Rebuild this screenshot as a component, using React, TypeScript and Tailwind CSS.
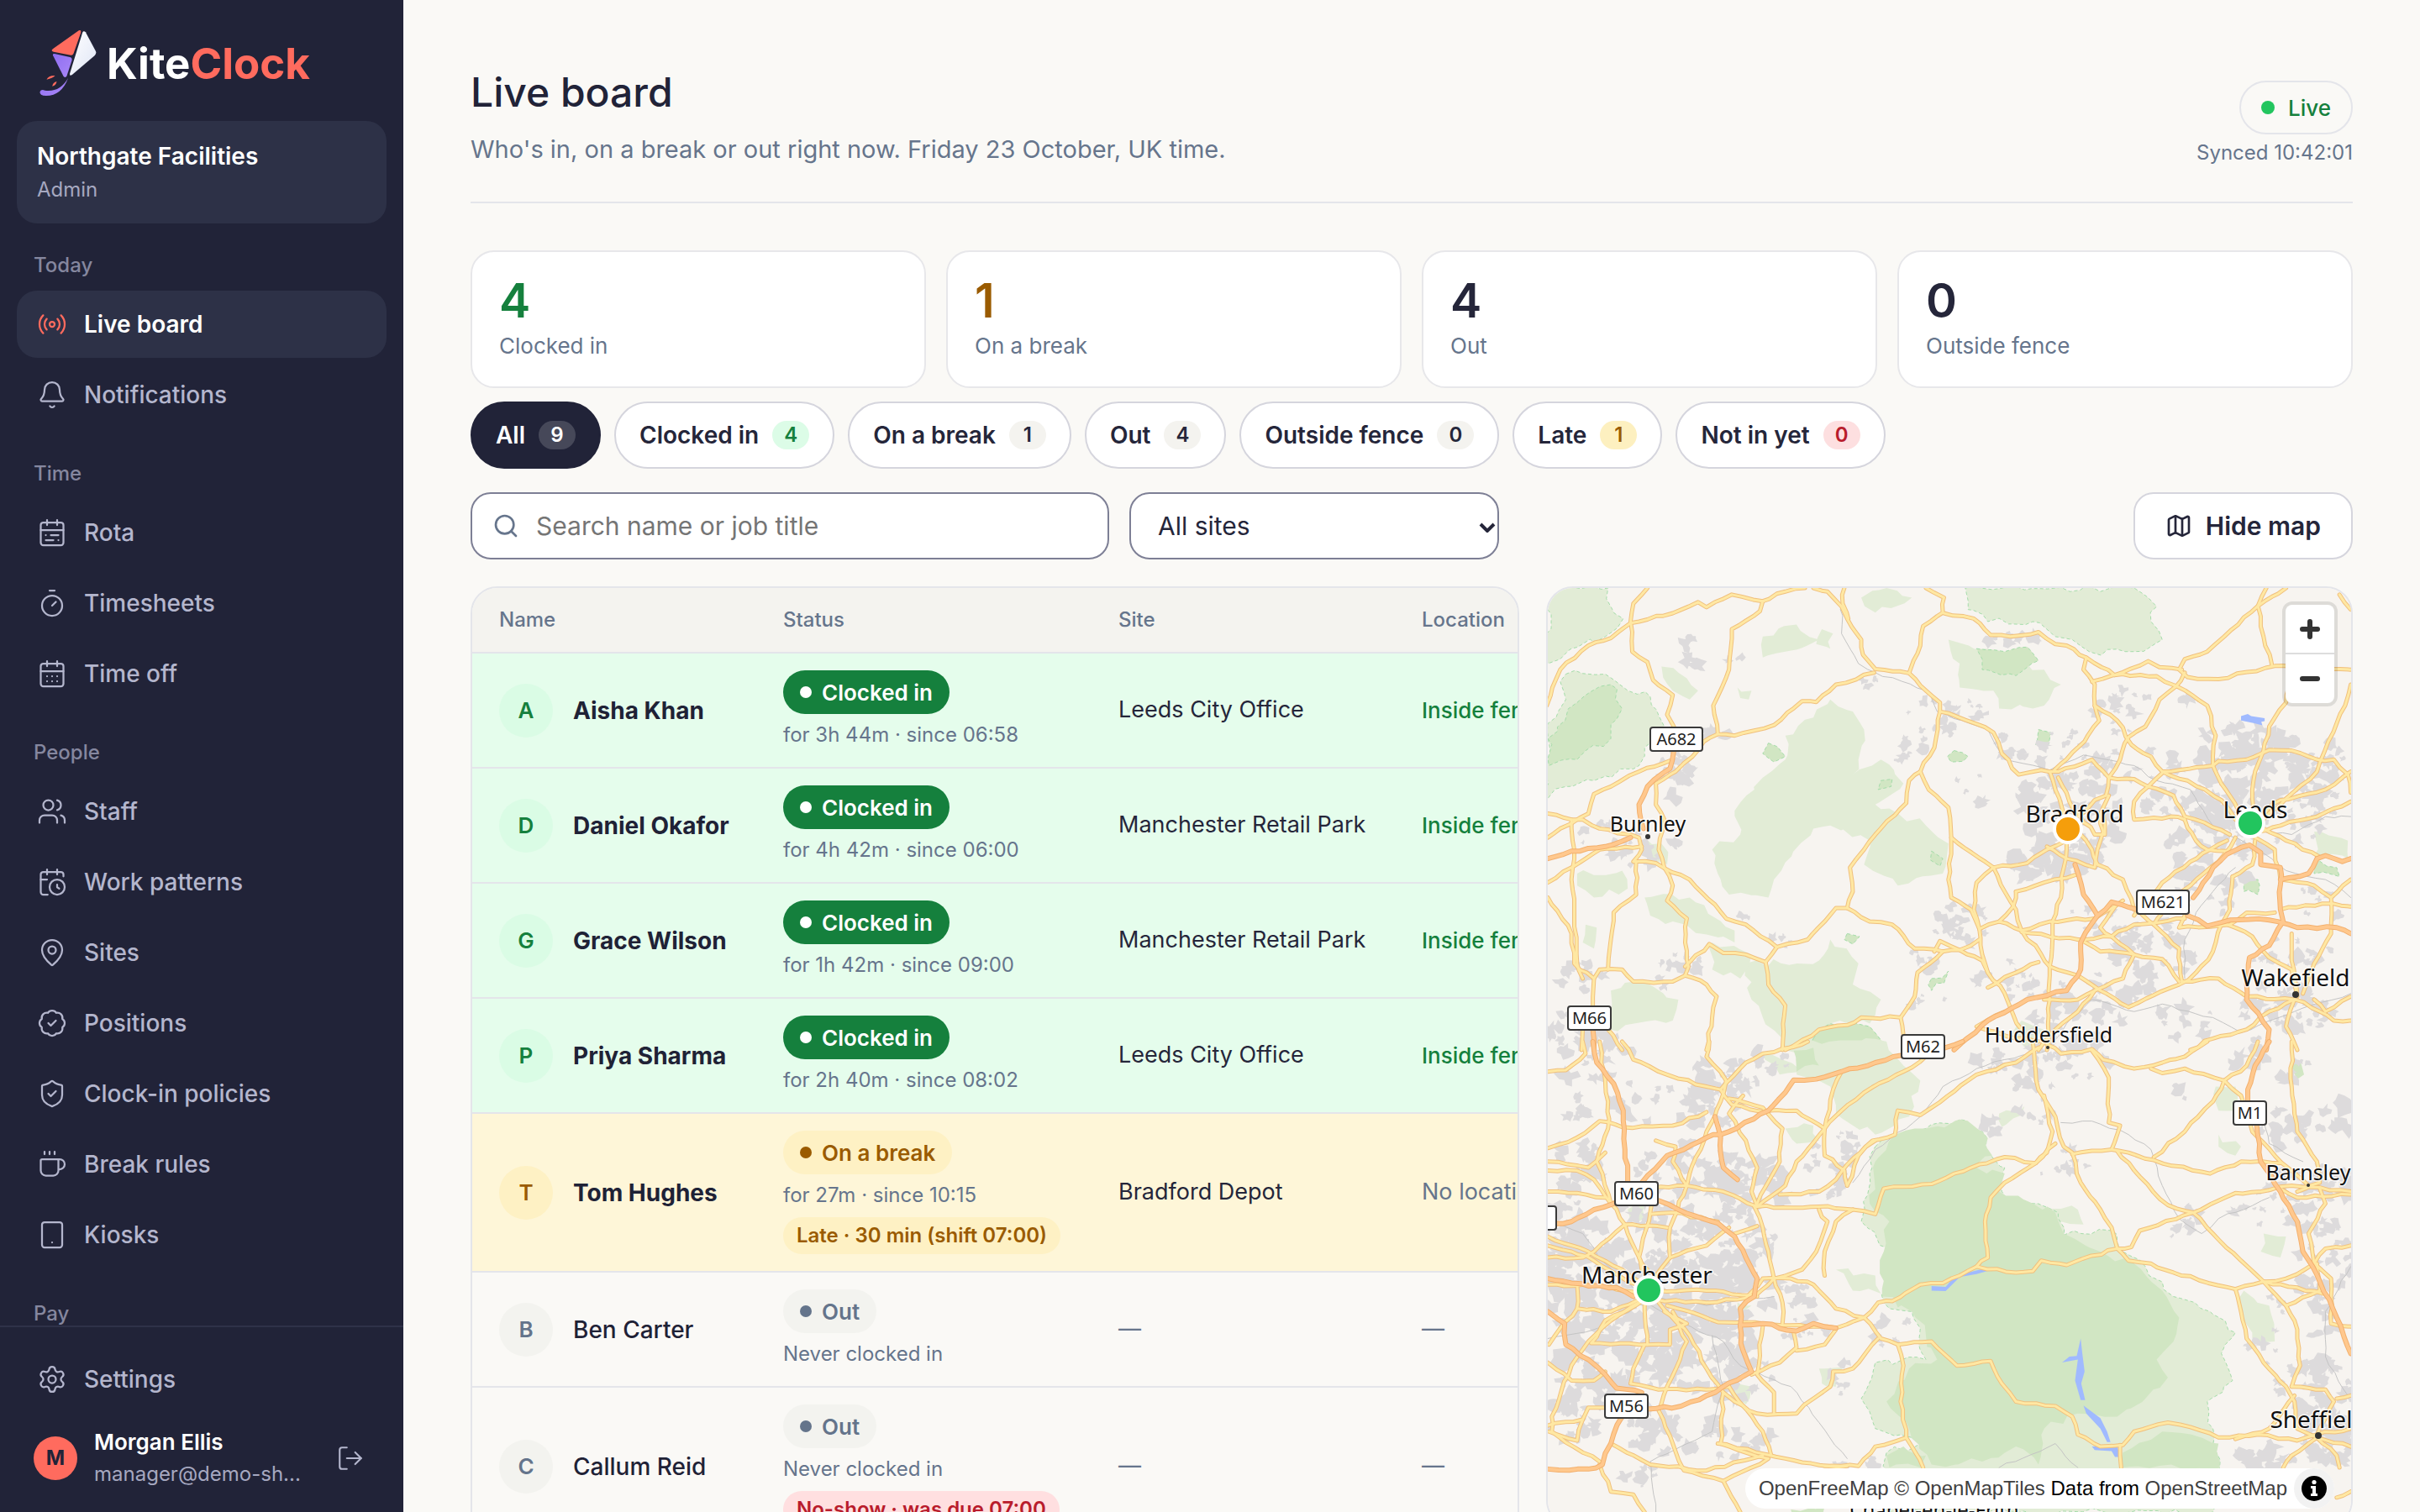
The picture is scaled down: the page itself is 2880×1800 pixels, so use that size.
import React from "react";
import {
  BadgeCheck,
  Bell,
  CalendarClock,
  CalendarDays,
  CalendarRange,
  Coffee,
  LogOut,
  Map as MapIcon,
  MapPin,
  Radio,
  Search,
  Settings,
  ShieldCheck,
  Tablet,
  Timer,
  Users,
  type LucideIcon,
} from "lucide-react";

type NavEntry = { label: string; icon: LucideIcon; active?: boolean };

const NAV: { title: string; items: NavEntry[] }[] = [
  {
    title: "Today",
    items: [
      { label: "Live board", icon: Radio, active: true },
      { label: "Notifications", icon: Bell },
    ],
  },
  {
    title: "Time",
    items: [
      { label: "Rota", icon: CalendarRange },
      { label: "Timesheets", icon: Timer },
      { label: "Time off", icon: CalendarDays },
    ],
  },
  {
    title: "People",
    items: [
      { label: "Staff", icon: Users },
      { label: "Work patterns", icon: CalendarClock },
      { label: "Sites", icon: MapPin },
      { label: "Positions", icon: BadgeCheck },
      { label: "Clock-in policies", icon: ShieldCheck },
      { label: "Break rules", icon: Coffee },
      { label: "Kiosks", icon: Tablet },
    ],
  },
  { title: "Pay", items: [] },
];

function Logo() {
  return (
    <svg viewBox="50 45 206 240" className="h-20 w-[69px]" aria-hidden="true">
      <defs>
        <linearGradient id="kite-violet" x1="0" y1="0" x2="1" y2="1">
          <stop offset="0" stopColor="#8f6df0" />
          <stop offset="1" stopColor="#a988f8" />
        </linearGradient>
        <linearGradient id="kite-white" x1="0" y1="0" x2="1" y2="1">
          <stop offset="0" stopColor="#ffffff" />
          <stop offset="1" stopColor="#dfe5f5" />
        </linearGradient>
      </defs>
      <path d="M193 49 102 113Q90 121 103 125L165 137Q171 138 174 131L200 57Q202 45 193 49Z" fill="#ff6b5e" />
      <path d="M106 132Q98 131 101 139L138 212Q145 221 150 211L168 156Q170 146 161 144Z" fill="url(#kite-violet)" />
      <path d="M206 56Q210 48 217 55L253 122Q257 130 250 138L169 207Q159 213 161 202Z" fill="url(#kite-white)" />
      <path d="M155 218Q132 281 76 282Q52 282 54 268Q58 257 72 263Q126 270 155 218Z" fill="url(#kite-violet)" />
      <path d="M78 224Q84 209 108 210Q100 220 78 224Z" fill="#ff6b5e" />
      <path d="M98 248Q100 235 114 231Q112 245 98 248Z" fill="#ff6b5e" />
    </svg>
  );
}

function NavLink({ label, icon: Icon, active }: NavEntry) {
  return (
    <a
      href="#"
      aria-current={active ? "page" : undefined}
      className={
        active
          ? "flex h-20 items-center gap-5 rounded-3xl bg-[#2d3147] px-6 text-[28px] font-semibold text-white"
          : "flex h-20 items-center gap-5 rounded-3xl px-6 text-[28px] font-medium text-[#b4b6cd]"
      }
    >
      <Icon size={36} strokeWidth={1.5} className={active ? "text-[#ff6b5e]" : "text-[#b4b6cd]"} />
      {label}
    </a>
  );
}

function Sidebar() {
  return (
    <aside className="flex w-[480px] shrink-0 flex-col bg-[#212338]">
      <div className="flex h-36 shrink-0 items-center gap-3 pt-1.5 pl-[46px]">
        <Logo />
        <span className="text-[51px] leading-none font-bold text-white">
          Kite<span className="text-[#ff6b5e]">Clock</span>
        </span>
      </div>
      <div className="mx-5 shrink-0 rounded-3xl bg-[#2d3147] px-6 pt-[22px] pb-5">
        <div className="text-[28px] leading-10 font-semibold text-white">Northgate Facilities</div>
        <div className="text-[24px] leading-10 text-[#a6a8c0]">Admin</div>
      </div>
      <nav className="min-h-0 flex-1 overflow-hidden px-5">
        {NAV.map((s, i) => (
          <div key={s.title} className={i === 0 ? "pt-8" : "pt-9"}>
            <h2 className="mb-3 px-5 text-[24px] leading-9 font-medium text-[#85879f]">{s.title}</h2>
            <div className="flex flex-col gap-1">
              {s.items.map((it) => (
                <NavLink key={it.label} {...it} />
              ))}
            </div>
          </div>
        ))}
      </nav>
      <div className="shrink-0 border-t-2 border-[#2f3248] px-5 pt-[22px] pb-[26px]">
        <NavLink label="Settings" icon={Settings} />
        <div className="mt-4 flex items-center px-5">
          <span className="flex size-[52px] items-center justify-center rounded-full bg-[#ff6b5e] text-[24px] font-bold text-[#212338]">
            M
          </span>
          <div className="ml-5 min-w-0 flex-1">
            <div className="text-[26px] leading-[38px] font-semibold text-white">Morgan Ellis</div>
            <div className="text-[24px] leading-[38px] whitespace-nowrap text-[#a6a8c0]">manager@demo-sh...</div>
          </div>
          <button type="button" aria-label="Sign out" className="mr-1.5 text-[#b4b6cd]">
            <LogOut size={34} strokeWidth={1.5} />
          </button>
        </div>
      </div>
    </aside>
  );
}

const STATS = [
  { value: "4", label: "Clocked in", color: "text-[#15803d]" },
  { value: "1", label: "On a break", color: "text-[#9a5b00]" },
  { value: "4", label: "Out", color: "text-[#25263a]" },
  { value: "0", label: "Outside fence", color: "text-[#25263a]" },
];

const FILTERS = [
  { label: "All", count: "9", chip: "border-[#212338] bg-[#212338] text-white", badge: "bg-[#464859] text-white" },
  { label: "Clocked in", count: "4", chip: "border-[#d5d5dd] bg-white text-[#25263a]", badge: "bg-[#dcfce7] text-[#15803d]" },
  { label: "On a break", count: "1", chip: "border-[#d5d5dd] bg-white text-[#25263a]", badge: "bg-[#f4f3ef] text-[#25263a]" },
  { label: "Out", count: "4", chip: "border-[#d5d5dd] bg-white text-[#25263a]", badge: "bg-[#f4f3ef] text-[#25263a]" },
  { label: "Outside fence", count: "0", chip: "border-[#d5d5dd] bg-white text-[#25263a]", badge: "bg-[#f4f3ef] text-[#25263a]" },
  { label: "Late", count: "1", chip: "border-[#d5d5dd] bg-white text-[#25263a]", badge: "bg-[#fdf0c0] text-[#9a5b00]" },
  { label: "Not in yet", count: "0", chip: "border-[#d5d5dd] bg-white text-[#25263a]", badge: "bg-[#fddfe0] text-[#b91c2c]" },
];

type Tone = "in" | "break" | "out";
type Row = { name: string; tone: Tone; detail: string; flag?: string; site: string; location: string };

const ROWS: Row[] = [
  { name: "Aisha Khan", tone: "in", detail: "for 3h 44m · since 06:58", site: "Leeds City Office", location: "Inside fence" },
  { name: "Daniel Okafor", tone: "in", detail: "for 4h 42m · since 06:00", site: "Manchester Retail Park", location: "Inside fence" },
  { name: "Grace Wilson", tone: "in", detail: "for 1h 42m · since 09:00", site: "Manchester Retail Park", location: "Inside fence" },
  { name: "Priya Sharma", tone: "in", detail: "for 2h 40m · since 08:02", site: "Leeds City Office", location: "Inside fence" },
  { name: "Tom Hughes", tone: "break", detail: "for 27m · since 10:15", flag: "Late · 30 min (shift 07:00)", site: "Bradford Depot", location: "No location" },
  { name: "Ben Carter", tone: "out", detail: "Never clocked in", site: "—", location: "—" },
  { name: "Callum Reid", tone: "out", detail: "Never clocked in", flag: "No-show · was due 07:00", site: "—", location: "—" },
];

const TONES = {
  in: {
    label: "Clocked in",
    row: "bg-[#e5fdec]",
    avatar: "bg-[#dafce5] text-[#15803d]",
    pill: "bg-[#15803d] text-white",
    dot: "bg-white",
    name: "font-bold",
    site: "text-[#25263a]",
    location: "text-[26px] font-medium text-[#15803d]",
    flag: "",
  },
  break: {
    label: "On a break",
    row: "bg-[#fef6d8]",
    avatar: "bg-[#fef1c4] text-[#9a5b00]",
    pill: "bg-[#fef1c4] text-[#9a5b00]",
    dot: "bg-[#9a5b00]",
    name: "font-bold",
    site: "text-[#25263a]",
    location: "text-[27px] text-[#66758c]",
    flag: "bg-[#fef1c4] text-[#9a5b00]",
  },
  out: {
    label: "Out",
    row: "bg-[#faf9f6]",
    avatar: "bg-[#f3f3ef] text-[#64748b]",
    pill: "bg-[#f3f3ef] text-[#64748b]",
    dot: "bg-[#64748b]",
    name: "font-medium",
    site: "text-[#66758c]",
    location: "text-[27px] text-[#66758c]",
    flag: "bg-[#ffdfe0] text-[#b91c2c]",
  },
};

function StaffTable() {
  return (
    <div className="overflow-hidden rounded-[32px] border-2 border-[#e4e5ea] bg-[#faf9f6]">
      <table className="w-[1400px] table-fixed border-separate border-spacing-0 text-left">
        <colgroup>
          <col className="w-[338px]" />
          <col className="w-[399px]" />
          <col className="w-[361px]" />
          <col />
        </colgroup>
        <thead>
          <tr className="h-[78px] bg-[#f4f3ef] text-[24px] text-[#66758c]">
            {["Name", "Status", "Site", "Location"].map((h) => (
              <th key={h} scope="col" className="border-b-2 border-[#e4e5ea] px-8 font-medium">
                {h}
              </th>
            ))}
          </tr>
        </thead>
        <tbody>
          {ROWS.map((r) => {
            const t = TONES[r.tone];
            return (
              <tr key={r.name} className={t.row}>
                <td className="border-b-2 border-[#e4e5ea] px-8">
                  <div className="flex items-center gap-6">
                    <span className={`flex size-16 shrink-0 items-center justify-center rounded-full text-[26px] font-semibold ${t.avatar}`}>
                      {r.name[0]}
                    </span>
                    <span className={`text-[28px] whitespace-nowrap text-[#1f2236] ${t.name}`}>{r.name}</span>
                  </div>
                </td>
                <td className="border-b-2 border-[#e4e5ea] px-8 py-5 whitespace-nowrap">
                  <div className="flex flex-col items-start">
                    <span className={`flex h-[52px] items-center gap-3 rounded-full px-5 text-[26px] font-semibold ${t.pill}`}>
                      <span className={`size-3.5 rounded-full ${t.dot}`} />
                      {t.label}
                    </span>
                    <span className="mt-[7px] text-[24px] leading-9 text-[#66758c]">{r.detail}</span>
                    {r.flag && (
                      <span className={`mt-2 flex h-11 items-center rounded-full px-4 text-[24px] font-semibold ${t.flag}`}>
                        {r.flag}
                      </span>
                    )}
                  </div>
                </td>
                <td className={`border-b-2 border-[#e4e5ea] px-8 text-[27px] whitespace-nowrap ${t.site}`}>{r.site}</td>
                <td className={`border-b-2 border-[#e4e5ea] px-8 whitespace-nowrap ${t.location}`}>{r.location}</td>
              </tr>
            );
          })}
        </tbody>
      </table>
    </div>
  );
}

/* ---------- Map drawing ---------- */

function rng(seed: number) {
  let s = seed;
  return () => {
    s = (s * 1664525 + 1013904223) % 4294967296;
    return s / 4294967296;
  };
}

function parse(p: string): number[][] {
  return p.split(" ").map((q) => q.split(",").map(Number));
}

/* Adds small kinks between the given points so a line reads as a real road or coast. */
function rough(p: string, amp: number, closed: boolean, seed: number) {
  const pts = parse(p);
  const r = rng(seed * 7919 + 13);
  if (closed) pts.push(pts[0]);
  let d = `M${pts[0][0]} ${pts[0][1]}`;
  for (let i = 1; i < pts.length; i++) {
    const [x0, y0] = pts[i - 1];
    const [x1, y1] = pts[i];
    const n = Math.max(1, Math.round(Math.hypot((x1 - x0) * 0.67, (y1 - y0) * 0.36) / 11));
    for (let k = 1; k < n; k++) {
      const f = k / n;
      const x = x0 + (x1 - x0) * f + (r() - 0.5) * amp * 1.5;
      const y = y0 + (y1 - y0) * f + (r() - 0.5) * amp * 2.8;
      d += `L${x.toFixed(0)} ${y.toFixed(0)}`;
    }
    d += `L${x1} ${y1}`;
  }
  return closed ? d + "Z" : d;
}

/* Ragged patches of built-up land scattered round a centre: x, y, spread x, spread y, count, size. */
function patches(list: number[][], seed: number) {
  const r = rng(seed);
  let d = "";
  for (const [cx, cy, sx, sy, count, size] of list) {
    for (let i = 0; i < count; i++) {
      const a = r() * Math.PI * 2;
      const q = Math.sqrt(r());
      const x = cx + Math.cos(a) * q * sx;
      const y = cy + Math.sin(a) * q * sy;
      const base = size * (0.35 + r() * 0.9);
      const n = 11;
      for (let k = 0; k < n; k++) {
        const t = (k / n) * Math.PI * 2;
        const m = base * (0.3 + r() * 1.0);
        d += `${k ? "L" : "M"}${(x + Math.cos(t) * m).toFixed(0)} ${(y + Math.sin(t) * m * 1.7).toFixed(0)}`;
      }
      d += "Z";
    }
  }
  return d;
}

const NORTH_URBAN = patches(
  [
    [285, 230, 30, 60, 4, 14], [350, 260, 12, 30, 2, 10], [590, 330, 20, 40, 4, 9], [700, 470, 50, 80, 14, 13],
    [760, 440, 50, 50, 9, 10], [665, 570, 30, 60, 6, 11], [845, 200, 45, 18, 8, 13], [310, 520, 25, 30, 5, 11],
    [250, 650, 40, 90, 16, 14], [190, 900, 60, 80, 14, 13], [90, 850, 50, 60, 6, 12], [900, 560, 100, 60, 18, 13],
    [940, 800, 95, 180, 70, 16], [900, 960, 60, 60, 20, 16], [1050, 430, 60, 90, 14, 12], [1160, 400, 30, 30, 4, 13],
    [1250, 560, 110, 70, 36, 15], [1290, 720, 130, 190, 110, 16], [1120, 760, 60, 60, 14, 12], [1200, 900, 90, 120, 34, 14],
    [1380, 620, 60, 90, 18, 14], [1060, 620, 80, 60, 16, 12], [1170, 1050, 80, 80, 18, 13], [780, 680, 60, 70, 5, 12],
    [750, 1160, 50, 90, 22, 13], [680, 1260, 40, 40, 6, 11], [820, 1310, 60, 50, 10, 10], [1100, 1230, 80, 90, 30, 15],
    [1040, 1350, 60, 60, 14, 14], [1150, 1480, 60, 60, 10, 13], [950, 1480, 90, 90, 30, 14], [880, 1350, 60, 60, 12, 12],
    [1340, 1240, 80, 60, 16, 14], [1340, 1420, 90, 90, 34, 15], [240, 1300, 60, 60, 10, 12], [80, 1330, 40, 60, 9, 12],
    [430, 1210, 25, 25, 5, 9], [350, 1130, 30, 20, 3, 9], [60, 1500, 50, 60, 10, 14], [700, 1410, 50, 40, 5, 9],
    [1390, 1100, 50, 80, 9, 11], [1000, 1150, 70, 70, 10, 11],
  ],
  41,
);

const SOUTH_URBAN = patches(
  [
    [90, 50, 70, 80, 20, 16], [330, 130, 70, 80, 32, 15], [180, 200, 70, 70, 10, 15], [60, 230, 40, 60, 8, 12],
    [420, 70, 50, 40, 8, 12], [300, 230, 60, 70, 14, 14], [70, 420, 60, 80, 18, 15], [240, 420, 70, 90, 18, 15],
    [370, 480, 70, 130, 44, 17], [60, 620, 60, 90, 16, 17], [210, 620, 120, 100, 36, 15], [350, 650, 70, 110, 28, 15],
    [110, 760, 110, 110, 60, 18], [280, 780, 110, 120, 60, 18], [140, 900, 120, 90, 50, 18], [300, 980, 90, 110, 46, 17],
    [150, 1060, 110, 100, 50, 18], [320, 1120, 100, 90, 34, 16], [100, 1180, 90, 80, 26, 17], [220, 1290, 110, 80, 26, 16],
    [370, 1360, 60, 70, 14, 13], [60, 1300, 50, 60, 10, 13], [440, 850, 50, 60, 14, 14], [470, 960, 60, 40, 9, 13],
    [520, 430, 50, 100, 18, 13], [560, 330, 30, 60, 5, 11], [630, 970, 40, 60, 8, 13], [540, 1110, 30, 60, 5, 12],
    [850, 60, 70, 50, 14, 13], [960, 60, 70, 60, 14, 13], [880, 190, 40, 90, 12, 13], [1140, 180, 20, 30, 2, 13],
    [1300, 60, 70, 80, 14, 14], [1320, 280, 60, 60, 12, 15], [1410, 250, 40, 50, 5, 18], [1370, 480, 80, 60, 30, 15],
    [1300, 560, 80, 60, 14, 13], [1150, 610, 30, 60, 10, 13], [930, 400, 50, 60, 8, 10], [1400, 720, 50, 140, 28, 15],
    [1360, 900, 70, 100, 18, 14], [1380, 1180, 70, 120, 46, 16], [1400, 1330, 60, 80, 36, 17], [1290, 1390, 60, 50, 16, 15],
    [1290, 1040, 40, 50, 6, 12], [800, 280, 20, 30, 3, 14], [580, 1420, 50, 30, 9, 11], [190, 1450, 60, 30, 6, 12],
  ],
  97,
);

const NORTH_LIGHT = [
  "18,28 125,28 130,90 152,130 120,190 60,230 40,265 18,280",
  "50,315 120,315 160,370 200,390 225,490 190,560 180,620 100,670 50,690 18,730 18,480 50,400 40,340",
  "760,28 1060,28 1100,90 1090,140 1110,200 1060,240 980,240 950,200 920,190 880,140 800,140 765,100",
  "730,200 800,230 900,300 930,350 900,420 820,430 810,370 750,360 750,280",
  "520,400 560,440 580,500 570,600 560,650 610,600 650,680 600,750 690,820 730,880 720,980 640,1020 580,950 590,870 520,820 490,830 420,1000 410,1060 340,1050 320,980 310,900 360,850 350,770 400,660 440,600 440,520 490,460",
  "370,1280 500,1270 520,1200 570,1280 560,1350 610,1400 590,1480 520,1480 490,1568 440,1568 400,1460 380,1400",
  "130,1370 190,1340 250,1400 240,1470 130,1500",
  "400,190 460,150 500,200 440,240 400,260",
  "575,60 620,28 665,60 600,110",
  "220,290 250,310 285,370 270,400 240,370",
  "505,165 525,180 520,230 495,215",
  "355,360 380,370 375,400 360,395",
  "70,980 150,970 160,1030 100,1060 70,1020",
  "190,1060 270,1060 350,1170 350,1210 290,1180 200,1120",
  "310,1210 380,1250 360,1330 310,1300",
  "190,860 220,880 230,950 205,940",
  "1380,840 1440,870 1440,930 1380,920",
  "860,1470 900,1500 870,1568 840,1520",
  "85,1150 105,1160 100,1230 80,1210",
];
const NORTH_DARK = [
  "70,410 130,350 150,430 130,530 70,600 20,620 18,530",
  "780,230 830,240 870,225 890,270 850,320 790,300",
  "890,500 912,510 908,550 885,550",
  "410,545 440,590 420,608 400,580",
  "740,570 765,590 735,608 728,590",
  "610,670 630,665 628,690 605,700",
  "700,1330 730,1305 722,1345 700,1370 694,1350",
  "700,905 720,930 715,955 698,935",
  "1255,1000 1280,1000 1280,1050 1255,1040",
  "550,1180 572,1190 560,1215 545,1200",
  "1380,940 1420,960 1425,990 1380,980",
  "490,1530 520,1480 590,1490 620,1568 470,1568",
];
const SOUTH_LIGHT = [
  "455,0 620,0 650,80 680,130 660,250 600,310 530,240 520,150 460,110",
  "600,350 640,310 690,290 750,260 790,300 810,390 830,420 825,500 880,540 925,570 935,645 1020,630 1040,700 1080,750 1130,850 1195,900 1240,970 1215,1040 1235,1130 1190,1200 1200,1290 1212,1420 1200,1568 620,1568 620,1370 680,1340 600,1290 575,1190 600,1070 690,1060 665,900 615,870 625,690 575,600 590,440",
  "400,40 450,70 470,100 430,110",
  "1205,150 1240,150 1240,230 1210,230",
  "1255,830 1300,880 1310,1000 1270,1010 1250,920",
  "530,760 600,780 610,840 560,830",
  "440,290 490,280 500,330 460,340",
  "1290,640 1330,650 1320,720 1285,700",
  "1210,310 1250,350 1240,380 1210,350",
  "160,560 195,540 190,590 165,595",
  "500,1090 545,1085 530,1150 505,1140",
  "900,545 960,560 970,610 930,600",
  "340,1150 380,1150 370,1210 345,1190",
  "820,240 865,215 860,245 825,285",
  "355,870 380,880 370,930 355,915",
];
const SOUTH_DARK = [
  "635,310 690,290 750,260 790,300 808,380 760,420 830,440 820,500 880,540 920,570 935,640 1000,700 1060,740 1110,830 1140,920 1130,1000 1100,1060 1120,1120 1080,1190 1030,1250 960,1240 900,1290 890,1410 850,1350 790,1400 700,1410 660,1290 620,1200 660,1090 710,1060 690,980 665,900 612,850 615,700 625,600 590,540 600,400",
  "1040,1370 1110,1300 1210,1340 1212,1420 1040,1420",
  "450,1560 510,1550 500,1600 455,1600",
  "1345,60 1362,110 1350,125 1340,90",
  "620,1380 650,1350 690,1380 680,1420 625,1420",
  "455,30 490,20 500,80 460,100",
];

const NORTH_ROADS = [
  "16,420 40,300 90,220 130,195 165,145 240,112 285,75 300,92 345,50 400,72 440,40 475,28",
  "195,28 170,80 165,140 168,240 195,275 205,335 240,385 230,450 242,490",
  "400,72 395,105 345,165 340,300 312,420 320,515 350,520 420,485 470,405 495,408 530,350 598,310",
  "490,28 515,40 540,90 550,130 575,200 578,250 600,298 660,312 690,370 715,410 715,440 760,468 810,510 825,580 855,650 895,635 925,640",
  "545,28 542,80 552,130",
  "690,28 722,60 720,110 685,155 680,220 668,270 660,312",
  "722,112 775,130 805,185 840,190 890,175 920,215 940,220 975,260 1025,318",
  "1330,28 1280,88 1220,190 1190,240 1150,265 1140,300 1155,325 1210,332 1310,288 1445,300",
  "1295,28 1280,88 1290,190 1305,285",
  "1425,50 1445,100",
  "1025,318 1085,272 1105,292 1145,300",
  "975,260 970,300 990,350 990,420 998,470 960,560 918,635",
  "985,340 1040,315 1100,322 1135,355 1105,400 1080,490 1050,525 1035,600 1015,660 1010,720 990,735 960,790",
  "990,420 1030,470 1055,550 1090,590 1110,640 1155,670 1215,735 1240,800 1265,850",
  "1150,310 1135,355 1190,420 1205,520 1200,620 1215,680 1230,720 1265,830",
  "1445,350 1435,420 1405,540 1385,640 1330,730 1290,800",
  "1335,330 1330,410 1300,490 1290,570 1275,640 1270,700 1275,800",
  "1110,640 1200,620 1210,605 1260,600 1300,568 1340,570 1385,600 1415,600 1440,650 1445,710",
  "1445,640 1400,700 1320,735 1280,790",
  "925,640 985,600 1015,660 1060,665 1085,690 1130,720 1150,790 1185,810 1230,850",
  "1110,645 1085,690 1060,740 1060,800 1125,790 1150,800",
  "1445,740 1385,790 1320,820 1280,840",
  "715,440 705,560 680,640 660,670 655,745 635,785 600,850 580,900 555,960 560,1040 550,1095 530,1095 480,1200 425,1225 405,1275 410,1350 440,1420 435,1568",
  "680,640 695,700 730,760 735,860 730,1000 735,1060 770,1100 785,1165 790,1250 800,1310 830,1380 845,1450 860,1500",
  "735,860 810,960 870,945 905,900 940,870",
  "810,960 780,1010 775,1100 785,1165",
  "810,960 830,1040 850,1100 860,1170 895,1250 910,1290 910,1400 905,1568",
  "910,640 920,700 940,800 940,900 935,960 930,1060 915,1140 910,1290",
  "925,660 945,740 990,850 1008,850 1005,780",
  "960,840 985,900 995,950 1040,1000 1060,1100 1095,1150 1140,1230 1145,1340",
  "905,890 940,930 990,960 1005,840 1000,780 1015,720",
  "850,1040 900,1010 955,985",
  "850,1040 845,1090 820,1140",
  "1060,1120 1110,1010 1160,940 1195,900 1225,870",
  "1095,1150 1130,1060 1160,1020 1210,940 1240,860",
  "1150,800 1170,870 1190,900 1225,905",
  "1265,850 1310,900 1320,1000 1380,1020 1410,1060 1445,1000",
  "1290,830 1330,870 1390,925",
  "1275,870 1270,950 1235,990",
  "1320,1100 1395,1080 1445,1090",
  "1235,990 1230,1100 1215,1150 1200,1240 1170,1310 1140,1350 1050,1425 1000,1370 960,1320 910,1290",
  "1340,1180 1340,1270 1350,1390",
  "1410,1060 1410,1180 1380,1280 1360,1380",
  "1225,1150 1270,1190 1300,1260 1340,1300 1350,1390",
  "1155,1090 1140,1160 1230,1150 1260,1110 1310,1110",
  "1145,1340 1210,1330 1260,1390 1345,1400",
  "1345,1400 1390,1440 1415,1470 1445,1470",
  "1380,1400 1400,1440 1445,1390",
  "1345,1400 1300,1440 1260,1500 1200,1530 1160,1568",
  "1345,1400 1330,1490 1350,1568",
  "785,1165 820,1140 860,1170 910,1140 990,1130 1040,1070",
  "860,1175 960,1200 1020,1190 1060,1150 1150,1130",
  "1030,1080 1000,1160 1020,1190 1060,1250 1040,1330 990,1370 960,1400 900,1400",
  "960,1200 1000,1240 1060,1250 1110,1265 1140,1340",
  "550,1095 590,1140 630,1150 670,1230 720,1240 750,1235 785,1200",
  "705,1240 715,1205 750,1235 790,1270 800,1310",
  "720,1240 675,1310 670,1390 645,1460 575,1460 550,1485 500,1500 440,1568",
  "645,1460 650,1520",
  "800,1360 850,1310 890,1275",
  "990,1370 960,1440 920,1500 890,1568",
  "830,1440 780,1490 850,1530 905,1540",
  "18,780 60,800 80,800 110,830 180,860 185,900 170,940 210,945 270,1000 335,1130 370,1150 425,1225",
  "320,515 295,540 275,590 245,640 210,680 210,750 225,800 215,900 225,960 240,1020 230,1070 265,1130 262,1210 268,1290 262,1320",
  "240,600 180,640 130,690 100,715 90,780 40,830 18,860",
  "60,800 65,900 60,1000 65,1100 70,1280 80,1330",
  "18,1060 60,1180 65,1280 100,1330 110,1300 150,1300 170,1340 240,1340 262,1320 300,1350 318,1390 310,1460 300,1568",
  "185,890 110,900 60,960 18,1010",
  "175,940 175,1050 135,1110 130,1200 125,1300",
  "262,1290 305,1215 330,1245 370,1250 405,1275",
  "100,1330 98,1420",
  "80,1500 78,1568",
  "125,1500 150,1568",
];
const NORTH_MOTORWAYS = [
  "18,930 60,905 120,890 165,860",
  "242,570 235,630 195,690 180,750 188,830",
  "98,1500 100,1568",
  "955,950 970,1050 995,1120 965,1210 965,1300 940,1370 870,1400 800,1470 740,1568",
  "995,1120 1020,1075 1065,1100",
  "1155,1120 1190,1155 1230,1135 1300,1135 1350,1160 1420,1160 1445,1180",
  "1165,1060 1200,960 1225,915 1265,885 1285,910 1285,950 1320,960 1320,1100 1325,1140 1300,1220 1265,1260 1260,1400 1300,1500 1295,1568",
  "1320,1000 1370,980 1385,930 1400,920 1430,940 1445,930",
];
const SOUTH_ROADS = [
  "18,100 50,95 85,40 80,0",
  "18,355 70,320 110,265 150,285 240,280 300,235",
  "110,0 118,100 125,200 125,290 105,400 115,440 130,540 155,610 175,700 185,760",
  "150,0 170,60 230,110 300,150 325,160 345,210 410,235",
  "305,0 300,50 335,130 325,200 300,300 270,440 265,480",
  "325,160 370,70 400,40 455,18 480,0",
  "340,190 400,220 435,290 430,400 390,540",
  "410,230 460,230 510,290 540,230 580,170 650,100 710,30",
  "540,100 525,160 510,290 510,380 545,430 550,480",
  "510,290 460,400 440,480 390,550",
  "365,180 340,240 370,330 390,420 380,500 390,550",
  "890,20 850,70 780,110 700,220 680,245 640,230 635,310 595,330 550,410 530,460 500,500 430,510",
  "18,430 70,430 100,460 130,540",
  "18,400 90,420 120,370",
  "18,500 70,505 120,520",
  "130,540 200,490 265,480 330,500 390,550",
  "210,330 245,350 240,400 265,480",
  "390,550 500,550 560,560 600,575 615,490 700,475 740,440 830,385 885,405 920,340",
  "385,550 400,620 410,700 420,790 385,850",
  "550,480 570,380 600,330",
  "500,560 515,600 495,700 470,760 420,790",
  "560,560 530,600 510,700 510,780",
  "18,680 60,700 100,730 160,800 190,820",
  "18,650 90,700 150,760 190,810",
  "18,720 80,720 100,700 155,610 230,620",
  "200,575 240,570 320,600",
  "205,520 200,570 180,720 195,760",
  "265,480 235,620 235,720 210,780",
  "340,620 300,680 235,720",
  "350,640 390,615",
  "210,830 300,830 390,850",
  "70,810 70,890 20,1010",
  "18,810 110,815 175,835",
  "70,890 130,900 180,860",
  "210,860 300,870 370,855 400,790 450,790 490,810 530,890 580,920 605,870 630,865 680,810 720,805 780,750 850,770 880,765 895,730 940,745 1030,690",
  "420,790 435,870 435,940",
  "580,920 530,955 400,940 320,935 230,880",
  "190,860 130,930 90,1000 60,1080 25,1250 25,1300 80,1370 110,1400",
  "190,870 195,1010 95,1005 120,930 180,870",
  "195,1010 235,1010 235,960 265,940 225,900",
  "190,1010 170,1090 165,1140 215,1160 300,1160 340,1150",
  "215,870 270,980 300,1090 330,1170 350,1200 390,1240 460,1240 490,1190 520,1150 525,1100 560,1090 605,990",
  "240,900 265,1000 230,1150 215,1230 240,1340 260,1430 330,1465 360,1568",
  "455,970 460,1020 430,1070 380,1110",
  "460,1030 510,1010 530,960",
  "580,920 610,990 640,1010 700,1000 745,1080 805,1065 825,1140 850,1200 920,1215 950,1250 960,1310 1000,1350 1040,1345 1060,1300 1120,1270 1160,1285 1210,1320 1280,1310 1350,1330 1385,1310",
  "640,1010 650,1080 645,1200 655,1320 685,1420",
  "655,1320 600,1350 570,1415 510,1415",
  "18,1070 60,1130 100,1130 120,1100",
  "18,1280 80,1260 90,1220 120,1220",
  "330,1170 325,1340 410,1390 330,1465",
  "340,1150 400,1300 415,1380",
  "320,1340 440,1390 515,1415 550,1415",
  "130,1340 200,1410 300,1430 400,1380",
  "20,1300 70,1330 80,1260",
  "110,1410 130,1500 170,1510 190,1568",
  "400,950 390,1110 420,1170 420,1240",
  "880,0 890,160 920,250 935,350 950,370 965,470 1000,560 1020,620 1030,690 1055,685 1070,630 1165,570 1210,530 1240,505 1300,495 1340,480 1445,500",
  "900,180 915,300 905,370 885,405",
  "905,10 930,40 985,25 1005,60 1060,90 1110,70 1150,50 1190,0",
  "985,30 1015,120 1015,270 1035,280 1020,360 950,375",
  "1090,90 1110,105 1150,90 1220,130 1260,80 1280,0",
  "1220,130 1200,200 1150,300 1095,385",
  "1020,360 1095,395 1195,440 1250,400 1320,405",
  "1030,365 1070,450 1120,545 1165,570 1200,640 1250,730 1290,800 1330,880 1350,960 1355,1080 1340,1150",
  "885,405 830,470 805,520 795,600 800,720 780,750",
  "1030,690 1050,730 1090,740 1130,770 1240,825 1250,900 1260,990 1290,1070 1330,1150 1345,1200 1350,1290 1385,1320",
  "1240,825 1290,800 1330,790 1380,740 1400,690 1445,680",
  "1320,490 1350,520 1445,510",
  "1220,130 1250,180 1270,300 1310,380 1370,480",
  "1340,0 1340,150 1350,300 1385,400 1390,470 1350,500",
  "1390,490 1400,540 1370,640 1380,740 1410,790 1410,940 1445,950",
  "1330,880 1390,830 1385,740",
  "1290,800 1350,820 1395,840",
  "1340,1150 1400,1160 1415,1200 1385,1310 1445,1290",
  "1420,1190 1445,1180",
  "1385,1320 1445,1350",
  "1385,1320 1340,1380 1325,1420",
  "1385,1320 1420,1380 1425,1420",
  "1345,1180 1300,1290 1240,1325",
  "1420,1520 1445,1500",
  "1035,1345 1037,1420",
];
const SOUTH_MOTORWAYS = [
  "98,0 105,70 135,140 152,230 155,360 160,470",
  "185,470 230,380 300,320 340,300 410,230 440,170 455,128 495,125 540,100 600,70 650,45",
  "710,30 755,0",
  "315,250 325,320 325,370 330,420 355,460",
  "18,615 60,600 100,560 135,540",
  "215,530 250,560 320,605 350,650 370,720 390,790 385,850 360,890 360,950 365,1030 380,1100 300,1180 255,1215 195,1225",
  "360,945 400,940 460,965 490,940 530,955",
  "18,900 48,940 50,1010 90,1060 120,1110 140,1155 185,1170",
  "150,1250 130,1340 115,1410 90,1425 18,1425",
  "18,790 60,805 140,820 170,850",
  "1300,0 1275,80 1262,160 1262,200",
  "1278,278 1285,400 1320,500 1350,600 1360,700 1390,800 1420,920 1445,1040",
];
const NORTH_RAIL = [
  "540,40 540,180 570,280 600,310 690,370 710,440 800,500 830,600 910,635 970,585 1060,620 1100,670 1160,700 1200,820 1260,880",
  "1265,880 1330,970 1400,1000 1445,1060",
  "1290,840 1340,850 1400,790 1445,790",
  "1240,960 1200,1040 1170,1110 1150,1200 1150,1330",
  "905,1568 940,1480 985,1400 1060,1440 1110,1415 1200,1460 1250,1510 1345,1440 1445,1380",
];
const SOUTH_RAIL = [
  "905,30 830,60 780,90 720,150 680,250 600,360 560,470",
  "930,270 985,265 1050,310 1090,360 1110,480 1140,590 1180,640 1210,590 1300,520",
  "18,590 80,640 120,740 190,850 300,880 420,850",
  "18,990 100,960 190,870 260,940 330,1000 360,1080 450,1150 500,1270 550,1390",
  "310,980 330,1150 310,1300 200,1400 210,1568",
  "820,1420 920,1340 960,1420",
  "1290,250 1300,340 1360,400",
  "1445,750 1400,900 1400,1050 1440,1180",
];
const WATER = [
  "700,815 725,818 740,785 765,770 790,758 805,762 780,775 750,785 725,832 700,830",
  "965,990 968,1040 972,1100 966,1140 973,1195 965,1195 955,1130 960,1060 932,1070 945,1050 958,1048",
  "970,1213 1000,1255 1012,1300 1018,1335 1012,1335 1000,1290 975,1240",
  "985,1350 1030,1348 1035,1385 1026,1385 1020,1365 990,1362",
];

function Land({ shapes, fill, dashed, seed }: { shapes: string[]; fill: string; dashed?: boolean; seed: number }) {
  return (
    <>
      {shapes.map((s, i) => (
        <path
          key={i}
          d={rough(s, 9, true, seed + i)}
          fill={fill}
          stroke={dashed ? "#a5dcaa" : "none"}
          strokeWidth="1"
          strokeDasharray="4 3"
          vectorEffect="non-scaling-stroke"
        />
      ))}
    </>
  );
}

function Lines({ paths, color, width, seed }: { paths: string[]; color: string; width: number; seed: number }) {
  return (
    <>
      {paths.map((s, i) => (
        <path
          key={i}
          d={rough(s, 3, false, seed + i)}
          fill="none"
          stroke={color}
          strokeWidth={width}
          strokeLinejoin="round"
          strokeLinecap="round"
          vectorEffect="non-scaling-stroke"
        />
      ))}
    </>
  );
}

const TOWNS = [
  { name: "Burnley", x: 1961, y: 990, size: 25, dot: [1961, 996, 3] },
  { name: "Bradford", x: 2469, y: 979, size: 28 },
  { name: "Leeds", x: 2684, y: 974, size: 28 },
  { name: "Wakefield", x: 2732, y: 1174, size: 28, dot: [2732, 1184, 4] },
  { name: "Huddersfield", x: 2438, y: 1241, size: 25, dot: [2437, 1247, 2] },
  { name: "Barnsley", x: 2747, y: 1405, size: 25, dot: [2747, 1411, 2] },
  { name: "Manchester", x: 1960, y: 1528, size: 28 },
  { name: "Sheffield", x: 2759, y: 1700, size: 28, dot: [2759, 1709, 4] },
  { name: "Chapel-en-le-Frith", x: 2302, y: 1806, size: 24 },
];

const SHIELDS = [
  { name: "A682", x: 1964, y: 866, w: 62 },
  { name: "M621", x: 2543, y: 1060, w: 62 },
  { name: "M66", x: 1866, y: 1198, w: 51 },
  { name: "M62", x: 2263, y: 1232, w: 51 },
  { name: "M1", x: 2658, y: 1311, w: 39 },
  { name: "M60", x: 1922, y: 1407, w: 51 },
  { name: "M56", x: 1910, y: 1660, w: 51 },
  { name: "", x: 1801, y: 1436, w: 51 },
];

const PINS = [
  { name: "Bradford Depot", x: 2461, y: 987, color: "#f59e0b" },
  { name: "Leeds City Office", x: 2678, y: 980, color: "#22c55e" },
  { name: "Manchester Retail Park", x: 1962, y: 1536, color: "#22c55e" },
];

const NORTH = "translate(1830 690) scale(0.6696 0.3571)";
const SOUTH = "translate(1830 1240) scale(0.6696 0.3571)";

function MapDrawing() {
  return (
    <svg viewBox="1842 700 956 1116" preserveAspectRatio="xMidYMin slice" className="block h-full w-full bg-[#f7f4f0]" role="img" aria-label="Map of sites">
      <g transform={NORTH}>
        <Land shapes={NORTH_LIGHT} fill="#e2ecd6" seed={1} />
        <Land shapes={NORTH_LIGHT.slice(0, 3)} fill="none" dashed seed={1} />
        <Land shapes={NORTH_DARK} fill="#d1e6c3" dashed seed={31} />
      </g>
      <g transform={SOUTH}>
        <Land shapes={SOUTH_LIGHT} fill="#e2ecd6" seed={61} />
        <Land shapes={SOUTH_LIGHT.slice(1, 2)} fill="none" dashed seed={62} />
        <Land shapes={SOUTH_DARK} fill="#d1e6c3" seed={91} />
      </g>
      <path d={NORTH_URBAN} transform={NORTH} fill="#dddbdc" />
      <path d={SOUTH_URBAN} transform={SOUTH} fill="#dddbdc" />
      <g transform={NORTH} fill="#a0baff">
        <path d="M1250 455 1262 448 1268 455 1292 462 1292 472 1286 474 1288 486 1272 478 1250 470Z" />
      </g>
      <g transform={SOUTH} fill="#a0baff">
        {WATER.map((w) => (
          <polygon key={w} points={w} />
        ))}
      </g>
      <g transform={NORTH}>
        <Lines paths={NORTH_RAIL} color="#c4c4c4" width={1} seed={300} />
      </g>
      <g transform={SOUTH}>
        <Lines paths={SOUTH_RAIL} color="#c4c4c4" width={1} seed={400} />
      </g>
      <g transform={NORTH}>
        <Lines paths={NORTH_ROADS} color="#f0c07e" width={5} seed={500} />
      </g>
      <g transform={SOUTH}>
        <Lines paths={SOUTH_ROADS} color="#f0c07e" width={5} seed={600} />
      </g>
      <g transform={NORTH}>
        <Lines paths={NORTH_ROADS} color="#ffe8a3" width={3} seed={500} />
      </g>
      <g transform={SOUTH}>
        <Lines paths={SOUTH_ROADS} color="#ffe8a3" width={3} seed={600} />
      </g>
      <g transform={NORTH}>
        <Lines paths={NORTH_MOTORWAYS} color="#f3b06e" width={6} seed={700} />
        <Lines paths={NORTH_MOTORWAYS} color="#ffc88d" width={4} seed={700} />
      </g>
      <g transform={SOUTH}>
        <Lines paths={SOUTH_MOTORWAYS} color="#f3b06e" width={6} seed={800} />
        <Lines paths={SOUTH_MOTORWAYS} color="#ffc88d" width={4} seed={800} />
      </g>
      <g fontFamily="'Noto Sans', sans-serif" textAnchor="middle">
        {SHIELDS.map((s) => (
          <g key={s.name}>
            <rect x={s.x} y={s.y} width={s.w} height="28" rx="3" fill="#fff" stroke="#3a3a3a" strokeWidth="2" />
            <text x={s.x + s.w / 2} y={s.y + 21} fontSize="20" fill="#222">
              {s.name}
            </text>
          </g>
        ))}
        {TOWNS.map((t) => (
          <g key={t.name}>
            {t.dot && <circle cx={t.dot[0]} cy={t.dot[1]} r={t.dot[2]} fill="#333" />}
            <text x={t.x} y={t.y} fontSize={t.size} fill="#111" stroke="#fff" strokeOpacity="0.8" strokeWidth="3" paintOrder="stroke" strokeLinejoin="round">
              {t.name}
            </text>
          </g>
        ))}
      </g>
      {PINS.map((p) => (
        <circle key={p.name} cx={p.x} cy={p.y} r="16" fill={p.color} stroke="#fff" strokeWidth="4">
          <title>{p.name}</title>
        </circle>
      ))}
    </svg>
  );
}

function MapPanel() {
  return (
    <div className="relative h-[1120px] overflow-hidden rounded-[32px] border-2 border-[#e4e5ea]">
      <MapDrawing />
      <div className="absolute top-5 right-5 w-[58px] overflow-hidden rounded-lg bg-white ring-4 ring-black/10">
        <button type="button" aria-label="Zoom in" className="flex h-[59px] w-full items-center justify-center border-b-2 border-[#dddddd]">
          <svg viewBox="0 0 24 24" className="size-6" aria-hidden="true">
            <path d="M12 3v18M3 12h18" stroke="#333" strokeWidth="6" strokeLinecap="round" />
          </svg>
        </button>
        <button type="button" aria-label="Zoom out" className="flex h-[58px] w-full items-center justify-center">
          <svg viewBox="0 0 24 24" className="size-6" aria-hidden="true">
            <path d="M3 12h18" stroke="#333" strokeWidth="6" strokeLinecap="round" />
          </svg>
        </button>
      </div>
      <div className="absolute right-5 bottom-5 flex h-12 items-center rounded-full bg-white pl-4 font-['Liberation_Sans',sans-serif] text-[24px] text-black">
        <p className="whitespace-nowrap">
          <a href="#" className="text-[#404040]">OpenFreeMap</a>{" "}
          <a href="#" className="text-[#404040]">© OpenMapTiles</a> Data from{" "}
          <a href="#" className="text-[#404040]">OpenStreetMap</a>
        </p>
        <button type="button" aria-label="Toggle attribution" className="ml-2 flex size-12 items-center justify-center rounded-full bg-[#f2f2f2]">
          <svg viewBox="0 0 30 30" className="size-[30px]" aria-hidden="true">
            <circle cx="15" cy="15" r="15" fill="#000" />
            <circle cx="15" cy="7.5" r="2.6" fill="#fff" />
            <path d="M11 12h6v9h2v3h-8v-3h2v-6h-2Z" fill="#fff" />
          </svg>
        </button>
      </div>
    </div>
  );
}

export default function App() {
  return (
    <div className="flex h-screen overflow-hidden bg-[#faf9f6] font-['Inter',sans-serif] text-[#25263a]">
      <Sidebar />
      <main className="min-w-0 flex-1 overflow-hidden px-20 pt-20">
        <header className="flex items-end justify-between border-b-2 border-[#e4e5ea] pb-10">
          <div>
            <h1 className="text-[48px] leading-[60px] font-medium text-[#212338]">Live board</h1>
            <p className="mt-4 text-[29px] leading-[44px] text-[#66758c]">
              Who's in, on a break or out right now. Friday 23 October, UK time.
            </p>
          </div>
          <div className="flex flex-col items-end">
            <span className="flex h-16 items-center gap-4 rounded-full border-2 border-[#e4e5ea] px-6 text-[26px] font-medium text-[#15803d]">
              <span className="size-4 rounded-full bg-[#22c55e]" />
              Live
            </span>
            <span className="mt-1 text-[24px] leading-9 text-[#66758c]">Synced 10:42:01</span>
          </div>
        </header>

        <section aria-label="Summary" className="mt-14 grid grid-cols-4 gap-6">
          {STATS.map((s) => (
            <div key={s.label} className="rounded-[28px] border-2 border-[#e7e7ea] bg-white px-8 pt-7 pb-7">
              <div className={`text-[56px] leading-[60px] font-semibold ${s.color}`}>{s.value}</div>
              <div className="mt-1 text-[26px] leading-10 text-[#66758c]">{s.label}</div>
            </div>
          ))}
        </section>

        <div className="mt-4 flex flex-wrap gap-4">
          {FILTERS.map((f) => (
            <button key={f.label} type="button" className={`flex h-20 items-center gap-4 rounded-full border-2 px-7 text-[28px] font-semibold ${f.chip}`}>
              {f.label}
              <span className={`flex h-[34px] w-11 items-center justify-center rounded-full text-[24px] ${f.badge}`}>{f.count}</span>
            </button>
          ))}
        </div>

        <div className="mt-7 flex gap-6">
          <div className="relative w-[760px]">
            <Search size={32} strokeWidth={2} className="absolute top-6 left-[26px] text-[#66758c]" />
            <input
              type="search"
              aria-label="Search name or job title"
              placeholder="Search name or job title"
              className="h-20 w-full rounded-3xl border-2 border-[#7d7f95] bg-white pr-6 pl-[76px] text-[30px] placeholder:text-[#757575]"
            />
          </div>
          <div className="relative w-[440px]">
            <select aria-label="Site" className="h-20 w-full appearance-none rounded-3xl border-2 border-[#7d7f95] bg-white px-8 text-[30px] text-[#25263a]">
              <option>All sites</option>
            </select>
            <svg viewBox="0 0 20 12" className="pointer-events-none absolute top-9 right-1 h-3 w-5" aria-hidden="true">
              <path d="M2 2l8 8 8-8" fill="none" stroke="#25263a" strokeWidth="4" />
            </svg>
          </div>
          <button type="button" className="ml-auto flex h-20 items-center gap-4 rounded-3xl border-2 border-[#d5d5dd] bg-white px-9 text-[30px] font-semibold text-[#25263a]">
            <MapIcon size={32} strokeWidth={2} />
            Hide map
          </button>
        </div>

        <div className="mt-8 grid grid-cols-[13fr_10fr] items-start gap-8">
          <StaffTable />
          <MapPanel />
        </div>
      </main>
    </div>
  );
}
